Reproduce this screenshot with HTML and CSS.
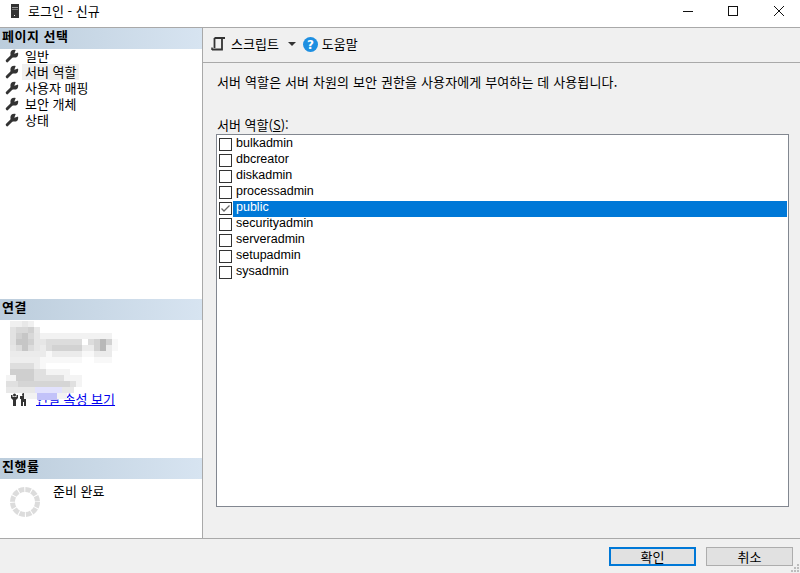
FILE: index.html
```html
<!DOCTYPE html>
<html lang="ko">
<head>
<meta charset="utf-8">
<title>로그인 - 신규</title>
<link rel="stylesheet" href="styles.css">
</head>
<body>
<svg class="defs" width="0" height="0">
  <symbol id="wrench" viewBox="0 0 14 14">
    <path d="M2.200 11.800 7.500 6.500" stroke="#333" stroke-width="3" stroke-linecap="round" fill="none"/>
    <circle cx="9.300" cy="4.700" r="3.900" fill="#333"/>
    <path d="M9.300 4.700 11 .2 14 .2 14 3.200Z" fill="#fff"/>
  </symbol>
</svg>
<div class="window">
  <header class="titlebar">
    <svg class="app-icon" width="8" height="14" viewBox="0 0 8 14"><rect width="8" height="14" fill="#333"/><rect x="1" y="3" width="6" height="1" fill="#999"/><rect x="1" y="5" width="6" height="1" fill="#777"/><rect x="3" y="11" width="1" height="1" fill="#eee"/></svg>
    <span class="title-text">로그인 - 신규</span>
    <span class="spacer"></span>
    <div class="win-controls">
      <svg width="45" height="20" viewBox="0 0 45 20"><rect x="18" y="11" width="10" height="1" fill="#111"/></svg>
      <svg width="45" height="20" viewBox="0 0 45 20"><rect x="18.500" y="6.500" width="9" height="9" fill="none" stroke="#111"/></svg>
      <svg width="45" height="20" viewBox="0 0 45 20"><path d="M19 6l10 10M29 6L19 16" stroke="#111" fill="none"/></svg>
    </div>
  </header>
  <main class="content">
    <aside class="sidebar">
      <section class="side-pages">
        <h2 class="side-head">페이지 선택</h2>
        <ul class="page-list">
          <li class="page-item"><svg class="wrench" width="14" height="14"><use href="#wrench"/></svg><span class="page-label">일반</span></li>
          <li class="page-item"><svg class="wrench" width="14" height="14"><use href="#wrench"/></svg><span class="page-label hovered">서버 역할</span></li>
          <li class="page-item"><svg class="wrench" width="14" height="14"><use href="#wrench"/></svg><span class="page-label">사용자 매핑</span></li>
          <li class="page-item"><svg class="wrench" width="14" height="14"><use href="#wrench"/></svg><span class="page-label">보안 개체</span></li>
          <li class="page-item"><svg class="wrench" width="14" height="14"><use href="#wrench"/></svg><span class="page-label">상태</span></li>
        </ul>
      </section>
      <section class="side-conn">
        <h2 class="side-head">연결</h2>
        <div class="conn-body">
          <div class="conn-link-row">
            <svg class="people" width="16" height="13" viewBox="0 0 16 13"><path d="M0 2h1.500v2h4V2H7v3L5 7v6H2V7L0 5ZM9 3h7v3h-1v7h-2V9h-1v4h-2V6H9Z" fill="#333"/><circle cx="3.500" cy="2" r="1.500" fill="#333"/><circle cx="12.500" cy="1.500" r="1.500" fill="#333"/></svg>
            <a class="conn-link" href="#">연결 속성 보기</a>
          </div>
          <svg class="conn-blur" width="120" height="88" viewBox="0 0 120 88" shape-rendering="crispEdges">
            <path fill="#f0f0f0" d="M10 1h12v6H10zM28 1h6v6h-6z"/>
            <path fill="#e8e8e8" d="M22 1h6v6h-6zM34 7h6v6h-6z"/>
            <path fill="#e2e2e2" d="M10 7h6v6h-6zM10 13h6v6h-6zM10 19h6v6h-6z"/>
            <path fill="#d8d8d8" d="M16 7h12v6H16zM28 13h6v6h-6z"/>
            <path fill="#d0d0d0" d="M28 7h6v6h-6zM16 13h6v6h-6zM28 19h6v6h-6z"/>
            <path fill="#c6c6c6" d="M22 13h6v6h-6zM16 19h6v6h-6zM22 19h6v6h-6zM22 25h6v6h-6z"/>
            <path fill="#e6e6e6" d="M34 13h6v6h-6zM34 19h6v6h-6zM10 25h6v6h-6zM40 19h6v6h-6zM34 25h6v6h-6z"/>
            <path fill="#f2f2f2" d="M40 13h6v6h-6zM46 13h6v6h-6zM52 13h48v6H52zM100 13h12v6h-12z"/>
            <path fill="#dcdcdc" d="M46 19h24v6H46zM70 19h12v6H70zM16 25h6v6h-6zM28 25h6v6h-6zM46 25h6v6h-6zM88 19h6v6h-6z"/>
            <path fill="#d2d2d2" d="M52 25h24v6H52zM94 19h6v6h-6zM76 25h6v6h-6zM94 25h6v6h-6zM106 19h6v6h-6z"/>
            <path fill="#b8b8b8" d="M100 19h6v6h-6zM100 25h6v6h-6z"/>
            <path fill="#ebebeb" d="M40 25h6v6h-6zM82 25h12v6H82zM106 25h6v6h-6zM10 31h6v6h-6zM16 31h24v6H16zM40 31h6v6h-6zM52 31h30v6H52zM94 31h18v6H94z"/>
            <path fill="#f8f8f8" d="M46 31h6v6h-6zM82 31h12v6H82zM112 19h6v12h-6zM40 37h6v12h-6zM46 37h36v6H46zM94 37h18v6H94z"/>
            <path fill="#eeeeee" d="M10 37h6v6h-6zM34 37h6v6h-6zM16 37h18v6H16zM34 43h6v6h-6z"/>
            <path fill="#dedede" d="M16 43h18v6H16zM10 43h6v6h-6z"/>
            <path fill="#cfcfcf" d="M10 49h24v6H10zM16 55h18v6H16z"/>
            <path fill="#e0e0e0" d="M34 49h12v6H34zM34 55h12v6H34zM46 55h18v6H46zM6 61h12v6H6zM70 61h6v6h-6z"/>
            <path fill="#d5d5d5" d="M18 61h28v6H18zM46 61h24v6H46z"/>
            <path fill="#f4f4f4" d="M46 49h24v6H46zM64 55h18v6H64zM6 55h10v6H6zM76 61h6v6h-6z"/>
            <path fill="#e8e8e8" d="M6 67h29v6H6zM62 67h12v6H62z"/>
            <path fill="#e2e2fd" d="M35 67h27v6H35z"/>
            <path fill="#f2f2f2" d="M24 73h13v6H24zM57 73h10v6H57z"/>
            <path fill="#c2c2f9" d="M37 73h20v7H37z"/>
          </svg>
        </div>
      </section>
      <section class="side-progress">
        <h2 class="side-head">진행률</h2>
        <div class="progress-body">
          <svg class="spinner" width="32" height="32" viewBox="0 0 32 32"><circle cx="16" cy="16" r="12.500" fill="none" stroke="#dcdcdc" stroke-width="5" stroke-dasharray="5.500 1.040"/></svg>
          <span class="progress-text">준비 완료</span>
        </div>
      </section>
    </aside>
    <section class="pane">
      <div class="toolbar">
        <svg class="script-icon" width="14" height="14" viewBox="0 0 14 14"><path d="M3.500 1H14M3.500 1V11M11 1V12.500H1" fill="none" stroke="#333" stroke-width="1.800"/><path d="M1 10.500v2.500" stroke="#333" stroke-width="1.500"/></svg>
        <span class="tool-label">스크립트</span>
        <svg class="caret" width="8" height="4" viewBox="0 0 8 4"><path d="M0 0h8L4 4Z" fill="#333"/></svg>
        <svg class="help-icon" width="15" height="15" viewBox="0 0 15 15"><circle cx="7.500" cy="7.500" r="7.500" fill="#1e8fe1"/><text x="7.500" y="12" class="help-q" text-anchor="middle">?</text></svg>
        <span class="tool-label">도움말</span>
      </div>
      <div class="pane-body">
        <p class="desc">서버 역할은 서버 차원의 보안 권한을 사용자에게 부여하는 데 사용됩니다.</p>
        <label class="list-label">서버 역할(<u>S</u>):</label>
        <div class="listbox">
          <div class="row"><span class="box"></span><span class="row-text">bulkadmin</span></div>
          <div class="row"><span class="box"></span><span class="row-text">dbcreator</span></div>
          <div class="row"><span class="box"></span><span class="row-text">diskadmin</span></div>
          <div class="row"><span class="box"></span><span class="row-text">processadmin</span></div>
          <div class="row"><span class="box"><svg width="11" height="11" viewBox="0 0 11 11"><path d="M1.500 5.500 4 8 9.500 2.500" fill="none" stroke="#666" stroke-width="1.300"/></svg></span><span class="row-text selected">public</span></div>
          <div class="row"><span class="box"></span><span class="row-text">securityadmin</span></div>
          <div class="row"><span class="box"></span><span class="row-text">serveradmin</span></div>
          <div class="row"><span class="box"></span><span class="row-text">setupadmin</span></div>
          <div class="row"><span class="box"></span><span class="row-text">sysadmin</span></div>
        </div>
      </div>
    </section>
  </main>
  <footer class="footer">
    <button class="btn primary">확인</button>
    <button class="btn">취소</button>
    <svg class="grip" width="10" height="10" viewBox="0 0 10 10"><path fill="#bdbdbd" d="M7 1h2v2H7zM4 4h2v2H4zM7 4h2v2H7zM1 7h2v2H1zM4 7h2v2H4zM7 7h2v2H7z"/></svg>
  </footer>
</div>
</body>
</html>
```
FILE: styles.css
```css
* { box-sizing: border-box; }
html, body { margin: 0; padding: 0; }
body { font-family: "Noto Sans CJK KR", "DejaVu Sans", sans-serif; font-size: 13px; color: #000; background: #f0f0f0; }
.defs { position: absolute; }
.window { width: 800px; height: 573px; display: flex; flex-direction: column; overflow: hidden; }
.titlebar { height: 28px; flex: none; background: #fff; border-bottom: 1px solid #a9a9a9; display: flex; align-items: center; padding: 0 0 6px 11px; }
.app-icon { margin-right: 9px; }
.title-text { line-height: 16px; }
.spacer { flex: 1; }
.win-controls { display: flex; align-self: flex-start; }
.win-controls svg { display: block; }
.content { flex: 1; display: flex; min-height: 0; border-bottom: 1px solid #a9a9a9; }
.sidebar { width: 203px; flex: none; background: #fff; border-right: 1px solid #a9a9a9; display: flex; flex-direction: column; }
.side-head { margin: 0; height: 21px; font-size: 13px; font-weight: 700; line-height: 16px; letter-spacing: .5px; padding-left: 2px; background: linear-gradient(90deg, #bccddc, #d7e4f1); }
.side-pages { height: 271px; flex: none; }
.page-list { list-style: none; margin: -1px 0 0; padding: 0; }
.page-item { height: 16px; display: flex; align-items: center; padding-left: 5px; }
.wrench { flex: none; margin-right: 3px; }
.page-label { padding: 0 3px; line-height: 16px; }
.hovered { background: #f0f0f0; }
.side-conn { height: 159px; flex: none; }
.conn-body { height: 138px; position: relative; }
.conn-blur { position: absolute; left: 0; top: 0; }
.conn-link-row { display: flex; align-items: center; height: 16px; padding-left: 11px; padding-top: 71px; box-sizing: content-box; }
.people { margin-right: 9px; }
.conn-link { color: #0000ee; text-decoration: underline; line-height: 16px; }
.side-progress { flex: 1; }
.progress-body { display: flex; padding: 4px 0 0 9px; }
.spinner { margin-top: 3px; margin-right: 12px; flex: none; }
.progress-text { line-height: 16px; }
.pane { flex: 1; display: flex; flex-direction: column; min-width: 0; }
.toolbar { height: 35px; flex: none; border-bottom: 1px solid #a9a9a9; display: flex; align-items: center; padding: 0 0 2px 8px; }
.script-icon { margin-right: 6px; }
.tool-label { line-height: 16px; }
.caret { margin: 0 7px 0 9px; }
.help-icon { margin-right: 4px; }
.help-q { font-family: "DejaVu Sans", sans-serif; font-size: 12px; font-weight: 700; fill: #fff; }
.pane-body { flex: 1; padding: 11px 11px 31px 13px; display: flex; flex-direction: column; }
.desc { margin: 0 0 0 1px; line-height: 16px; white-space: nowrap; letter-spacing: .13px; }
.list-label { margin: 27px 0 0 1px; line-height: 16px; height: 17px; display: block; }
.listbox { flex: 1; background: #fff; border: 1px solid #828790; padding: 2px 1px 0 2px; overflow: hidden; }
.row { height: 16px; display: flex; align-items: flex-start; }
.box { width: 13px; height: 13px; border: 1px solid #333; background: #fff; flex: none; margin-top: 1px; margin-right: 1px; display: block; }
.box svg { display: block; }
.row-text { flex: 1; height: 16px; line-height: 13px; padding-left: 3px; font-family: "Liberation Sans", Arial, sans-serif; font-size: 12.500px; }
.selected { background: #0078d7; color: #fff; }
.footer { height: 34px; flex: none; display: flex; justify-content: flex-end; align-items: flex-start; gap: 10px; padding: 8px 7px 0 0; position: relative; }
.btn { width: 87px; height: 19px; padding: 0; background: #e1e1e1; border: 1px solid #adadad; font: 13px/15px "Noto Sans CJK KR", sans-serif; color: #000; }
.primary { border: 2px solid #0078d7; }
.grip { position: absolute; right: 0; bottom: 0; }
```
